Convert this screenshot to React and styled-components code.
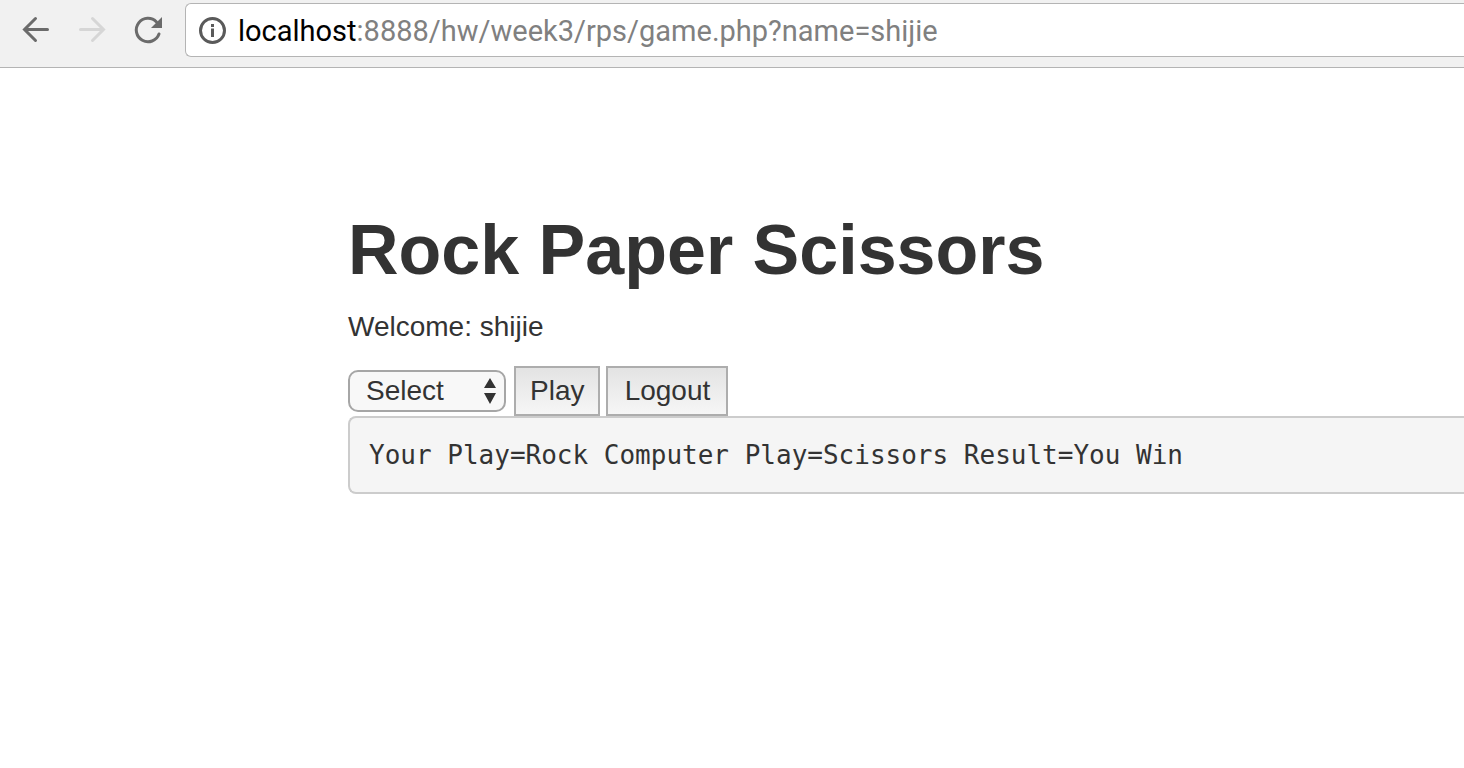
import React from "react";
import styled, { createGlobalStyle } from "styled-components";

const GlobalStyle = createGlobalStyle`
  *, *::before, *::after { box-sizing: border-box; }
  body {
    margin: 0;
    background: #fff;
    color: #333;
    font-family: "Liberation Sans", Arial, sans-serif;
    font-size: 28px;
    line-height: 40px;
    overflow-x: hidden;
  }
`;

const Toolbar = styled.header`
  display: flex;
  align-items: flex-start;
  height: 68px;
  padding: 3px 0 0 20px;
  background: #f1f1f1;
  border-bottom: 1px solid #b4b4b4;
`;

const NavButtons = styled.nav`
  display: flex;
  gap: 24px;
  padding: 11px 21px 0 0;
`;

const NavButton = styled.button`
  display: block;
  width: 32px;
  height: 32px;
  padding: 0;
  border: 0;
  background: none;
  color: #6b6b6b;

  &:disabled { color: #d6d6d6; }
`;

const Icon = styled.svg`
  display: block;
  width: 32px;
  height: 32px;
  fill: none;
  stroke: currentColor;
  stroke-width: 3;
  stroke-linecap: ${({ $round }) => ($round ? "round" : "butt")};
`;

const AddressBar = styled.div`
  display: flex;
  align-items: center;
  flex: 1;
  height: 54px;
  padding-left: 10px;
  background: #fff;
  border: 1px solid #b4b4b4;
  border-right: 0;
  border-radius: 6px 0 0 6px;
  color: #5a5a5a;
`;

const Address = styled.a`
  margin-left: 10px;
  padding-top: 2px;
  color: #808080;
  font-family: Roboto, sans-serif;
  font-size: 29px;
  text-decoration: none;
  white-space: nowrap;
`;

const Host = styled.span`
  color: #000;
`;

const Page = styled.main`
  padding: 142px 0 0 348px;
`;

const Title = styled.h1`
  margin: 0 0 16px;
  font-size: 70px;
  font-weight: 700;
  line-height: 80px;
`;

const Welcome = styled.p`
  margin: 0 0 19px;
  padding-top: 1px;
`;

const GameForm = styled.form`
  display: flex;
  align-items: center;
  height: 50px;
`;

const SelectBox = styled.div`
  position: relative;
  margin-right: 8px;
`;

const MoveSelect = styled.select`
  appearance: none;
  display: block;
  width: 158px;
  height: 42px;
  padding: 0 32px 0 16px;
  background: #f8f8f8;
  border: 2px solid #a6a6a6;
  border-radius: 10px;
  color: #333;
  font: inherit;
  line-height: 38px;
`;

const SelectArrows = styled.svg`
  position: absolute;
  top: 8px;
  right: 9px;
  width: 14px;
  height: 26px;
  fill: #333;
  pointer-events: none;
`;

const ActionButton = styled.button`
  min-width: ${({ $wide }) => ($wide ? "122px" : "86px")};
  height: 50px;
  margin-right: 6px;
  padding: 0 14px;
  background: linear-gradient(#e3e3e3, #f6f6f6);
  border: 2px solid #adadad;
  border-radius: 0;
  color: #333;
  font: inherit;
`;

const Result = styled.pre`
  margin: 0;
  padding: 17px 19px;
  background: #f5f5f5;
  border: 2px solid #ccc;
  border-right: 0;
  border-radius: 8px 0 0 8px;
  font-family: "DejaVu Sans Mono", monospace;
  font-size: 26px;
  line-height: 40px;
`;

export default function App() {
  return (
    <>
      <GlobalStyle />
      <Toolbar>
        <NavButtons aria-label="Browser">
          <NavButton type="button" aria-label="Back">
            <Icon $round viewBox="0 0 32 32">
              <path d="M27.500 15.500H5M15.500 4.500L4.500 15.500L15.500 26.500" />
            </Icon>
          </NavButton>
          <NavButton type="button" aria-label="Forward" disabled>
            <Icon $round viewBox="0 0 32 32">
              <path d="M4.500 15.500H27M16.500 4.500L27.500 15.500L16.500 26.500" />
            </Icon>
          </NavButton>
          <NavButton type="button" aria-label="Reload">
            <Icon $round viewBox="0 0 32 32">
              <path d="M27 20A11.700 11.700 0 1 1 24.500 8" />
              <path d="M30 3V14H19Z" fill="currentColor" stroke="none" />
            </Icon>
          </NavButton>
        </NavButtons>
        <AddressBar>
          <Icon viewBox="0 0 32 32" aria-hidden="true">
            <circle cx="16.500" cy="16.500" r="12" />
            <path d="M16.500 14.500V23M16.500 10V13" />
          </Icon>
          <Address href="#">
            <Host>localhost</Host>:8888/hw/week3/rps/game.php?name=shijie
          </Address>
        </AddressBar>
      </Toolbar>
      <Page>
        <Title>Rock Paper Scissors</Title>
        <Welcome>Welcome: shijie</Welcome>
        <GameForm onSubmit={(event) => event.preventDefault()}>
          <SelectBox>
            <MoveSelect aria-label="Your play" defaultValue="select">
              <option value="select">Select</option>
              <option value="rock">Rock</option>
              <option value="paper">Paper</option>
              <option value="scissors">Scissors</option>
            </MoveSelect>
            <SelectArrows viewBox="0 0 14 26" aria-hidden="true">
              <path d="M7 0L13 10H1ZM1 15H13L7 26Z" />
            </SelectArrows>
          </SelectBox>
          <ActionButton type="submit">Play</ActionButton>
          <ActionButton type="button" $wide>Logout</ActionButton>
        </GameForm>
        <Result>Your Play=Rock Computer Play=Scissors Result=You Win</Result>
      </Page>
    </>
  );
}
